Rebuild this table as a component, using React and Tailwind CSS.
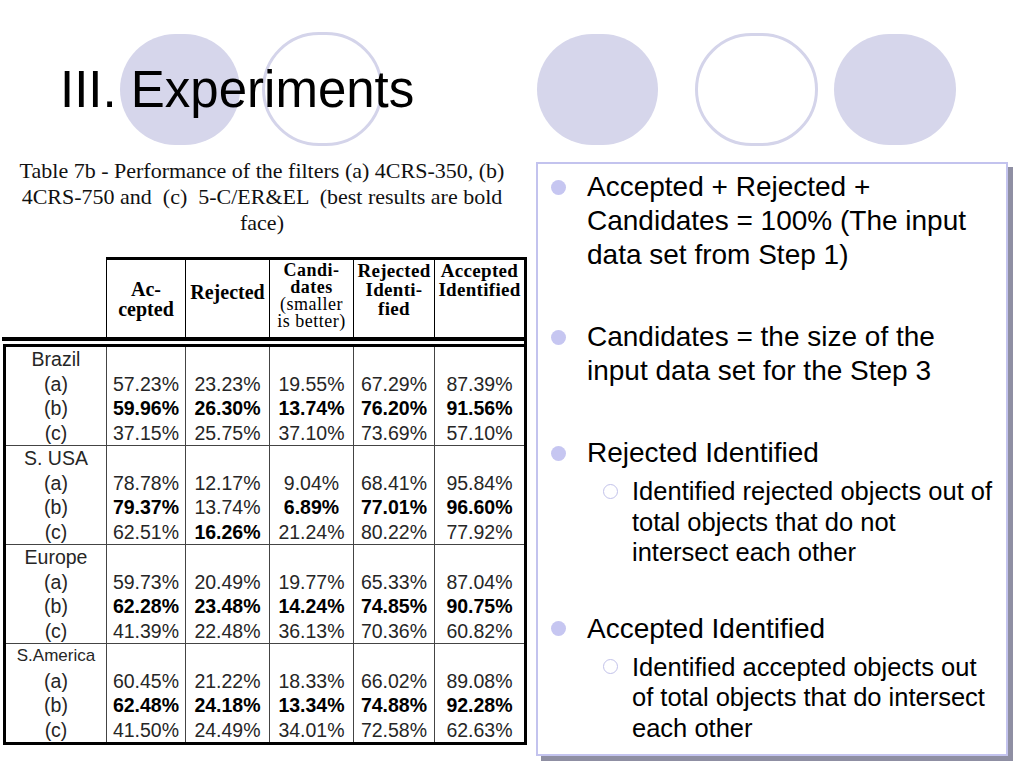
import React from 'react';

const colW = ['w-[79px]', 'w-[84px]', 'w-[84px]', 'w-[81px]', 'w-[90px]'];

const groups = [
    {
        name: 'Brazil',
        rows: [
            ['57.23%', '23.23%', '19.55%', '67.29%', '87.39%'],
            ['*59.96%', '*26.30%', '*13.74%', '*76.20%', '*91.56%'],
            ['37.15%', '25.75%', '37.10%', '73.69%', '57.10%'],
        ],
    },
    {
        name: 'S. USA',
        rows: [
            ['78.78%', '12.17%', '9.04%', '68.41%', '95.84%'],
            ['*79.37%', '13.74%', '*6.89%', '*77.01%', '*96.60%'],
            ['62.51%', '*16.26%', '21.24%', '80.22%', '77.92%'],
        ],
    },
    {
        name: 'Europe',
        rows: [
            ['59.73%', '20.49%', '19.77%', '65.33%', '87.04%'],
            ['*62.28%', '*23.48%', '*14.24%', '*74.85%', '*90.75%'],
            ['41.39%', '22.48%', '36.13%', '70.36%', '60.82%'],
        ],
    },
    {
        name: 'S.America',
        small: true,
        rows: [
            ['60.45%', '21.22%', '18.33%', '66.02%', '89.08%'],
            ['*62.48%', '*24.18%', '*13.34%', '*74.88%', '*92.28%'],
            ['41.50%', '24.49%', '34.01%', '72.58%', '62.63%'],
        ],
    },
];

const Cell = ({ value }) => {
    const bold = value.startsWith('*');
    return (
        <div className={bold ? 'font-bold text-black' : 'text-[#262626]'}>
            {bold ? value.slice(1) : value}
        </div>
    );
};

const Group = ({ group, first }) => (
    <div className={`flex ${first ? '' : 'border-t border-[#444]'}`}>
        <div className="w-[100px] text-center text-[#262626]">
            <div className={group.small ? 'text-[17px]' : ''}>{group.name}</div>
            <div>(a)</div>
            <div>(b)</div>
            <div>(c)</div>
        </div>
        {colW.map((w, i) => (
            <div key={i} className={`${w} border-l border-[#444] text-center`}>
                <div>&nbsp;</div>
                {group.rows.map((r, j) => (
                    <Cell key={j} value={r[i]} />
                ))}
            </div>
        ))}
    </div>
);

const Bullet = ({ children, className = '' }) => (
    <div className={`flex pl-[13px] ${className}`}>
        <div className="w-[36px] h-[34px] flex items-center shrink-0">
            <span className="w-[15px] h-[15px] rounded-full bg-[#c6c6f1]" />
        </div>
        <div className="w-[400px] text-[28px] leading-[34px]">{children}</div>
    </div>
);

const SubBullet = ({ children }) => (
    <div className="flex pl-[65px] mt-[6px]">
        <div className="w-[29px] h-[30.5px] flex items-center shrink-0">
            <span className="w-[15px] h-[15px] rounded-full border-[1.5px] border-[#c2c2ea] bg-white" />
        </div>
        <div className="w-[363px] text-[25.5px] leading-[30.5px]">{children}</div>
    </div>
);

export default function App() {
    return (
        <div className="relative w-[1024px] h-[768px] bg-white overflow-hidden font-['Liberation_Sans',Arial,sans-serif] text-black">
            {/* decorative circles behind the title */}
            <div className="absolute left-[120px] top-[34px] w-[120px] h-[111px] rounded-full bg-[#d6d6eb]" />
            <div className="absolute left-[262px] top-[32px] w-[121px] h-[114px] rounded-full border-[3px] border-[#d4d4ea]" />
            <div className="absolute left-[537px] top-[34px] w-[121px] h-[111px] rounded-full bg-[#d6d6eb]" />
            <div className="absolute left-[695px] top-[33px] w-[123px] h-[113px] rounded-full border-[3px] border-[#d4d4ea]" />
            <div className="absolute left-[834px] top-[34px] w-[122px] h-[111px] rounded-full bg-[#d6d6eb]" />

            <div className="relative h-[158px] pt-[64px] pl-[60px]">
                <h1 className="text-[51px] leading-none">III. Experiments</h1>
            </div>

            <div className="relative flex items-start">
                <div className="w-[530px]">
                    <div className="w-[524px] text-center whitespace-pre font-['Liberation_Serif','Times_New_Roman',serif] text-[22px] leading-[26px] text-[#111]">
                        <div>Table 7b - Performance of the filters (a) 4CRS-350, (b)</div>
                        <div>4CRS-750 and  (c)  5-C/ER&amp;EL  (best results are bold</div>
                        <div>face)</div>
                    </div>

                    <div className="mt-[21px]">
                        <div className="flex">
                            <div className="w-[106px]" />
                            <div className="flex h-[80px] border-t-[3px] border-r-[3px] border-black font-['Liberation_Serif','Times_New_Roman',serif] text-[20px] text-center">
                                <div className="w-[79px] border-l border-black flex items-center justify-center font-bold leading-[20px]">
                                    <div>Ac-<br />cepted</div>
                                </div>
                                <div className="w-[84px] border-l border-black flex items-center justify-center pb-[14px] font-bold leading-[20px]">
                                    Rejected
                                </div>
                                <div className="w-[84px] border-l border-black pt-[2px] text-[18px] tracking-[0.5px] leading-[17px]">
                                    <div className="font-bold">Candi-</div>
                                    <div className="font-bold">dates</div>
                                    <div>(smaller</div>
                                    <div>is better)</div>
                                </div>
                                <div className="w-[81px] border-l border-black pt-[1px] font-bold text-[19px] tracking-[0.3px] leading-[19px]">
                                    Rejected<br />Identi-<br />fied
                                </div>
                                <div className="w-[90px] border-l border-black pt-[1px] font-bold text-[19px] tracking-[0.3px] leading-[19px]">
                                    Accepted<br />Identified
                                </div>
                            </div>
                        </div>
                        <div className="ml-[2px] w-[525px] h-[4px] bg-black" />
                        <div className="ml-[3px] w-[524px] h-[3px] border-r-[3px] border-black" />
                        <div className="ml-[3px] w-[524px] border-[3px] border-black text-[19.5px] leading-[24.5px]">
                            {groups.map((g, i) => (
                                <Group key={g.name} group={g} first={i === 0} />
                            ))}
                        </div>
                    </div>
                </div>

                <div className="ml-[6px] mt-[4px] w-[472px] h-[594px] border-2 border-[#c3c3ee] shadow-[5px_5px_0_#8f8fa3] pt-[6px]">
                    <Bullet>Accepted + Rejected + Candidates = 100% (The input data set from Step 1)</Bullet>
                    <Bullet className="mt-[48px]">Candidates = the size of the input data set for the Step 3</Bullet>
                    <Bullet className="mt-[48px]">Rejected Identified</Bullet>
                    <SubBullet>Identified rejected objects out of total objects that do not intersect each other</SubBullet>
                    <Bullet className="mt-[44px]">Accepted Identified</Bullet>
                    <SubBullet>Identified accepted objects out of total objects that do intersect each other</SubBullet>
                </div>
            </div>
        </div>
    );
}
